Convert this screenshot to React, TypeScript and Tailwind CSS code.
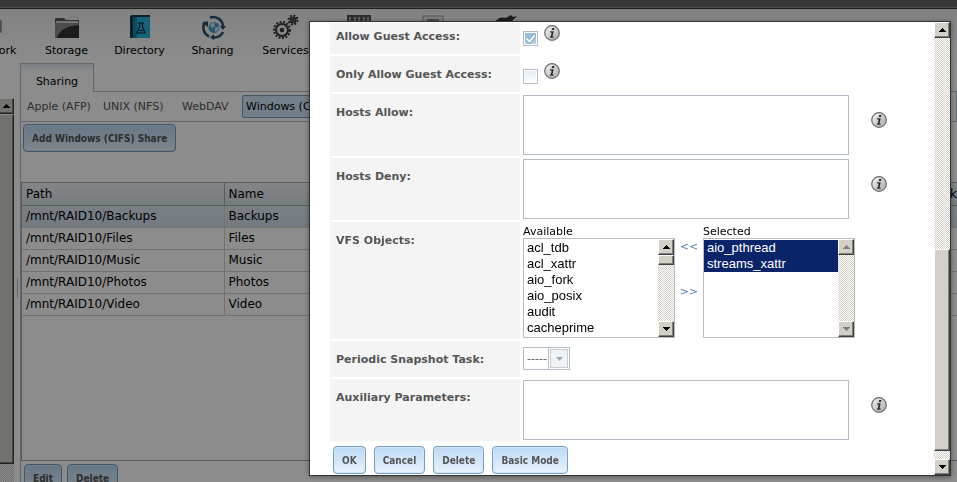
import React from "react";
import clsx from "clsx";

const navItems = [
    {label: "Network", icon: "network"},
    {label: "Storage", icon: "storage"},
    {label: "Directory", icon: "directory"},
    {label: "Sharing", icon: "sharing"},
    {label: "Services", icon: "services"},
    {label: "", icon: "plugins"},
    {label: "", icon: "jails"},
    {label: "", icon: "reporting"},
];

const shares = ["Backups", "Files", "Music", "Photos", "Video"];

const vfsAvailable = ["acl_tdb", "acl_xattr", "aio_fork", "aio_posix", "audit", "cacheprime"];
const vfsSelected = ["aio_pthread", "streams_xattr"];

const Gear: React.FC<{cx: number; cy: number; r: number}> = ({cx, cy, r}) => (
    <g>
        <circle cx={cx} cy={cy} r={r} fill="none" stroke="#3a3a3a" strokeWidth={2} strokeDasharray="2 1.5"/>
        <circle cx={cx} cy={cy} r={r - 2} fill="none" stroke="#3a3a3a" strokeWidth={2}/>
        <circle cx={cx} cy={cy} r={r / 3.5} fill="#3a3a3a"/>
    </g>
);

const NavIcon: React.FC<{name: string}> = ({name}) => (
    <svg viewBox="0 0 26 26" className="w-[26px] h-[26px]" aria-hidden="true">
        {name === "network" && (
            <g>
                <rect x="4" y="7" width="16" height="11" fill="#c8d4da" stroke="#50565a"/>
                <rect x="6" y="9" width="12" height="7" fill="#2785b4"/>
                <path d="M10 18h5v3h4v2H7v-2h3z" fill="#59656c"/>
            </g>
        )}
        {name === "storage" && (
            <g>
                <path d="M14 5q1-3 4-2 4-1 6 2v4H14z" fill="#f0f0f0" stroke="#bbb" strokeWidth=".6"/>
                <path d="M1 5q0-1 1-1h8l2 2h13v18H1z" fill="#585858"/>
                <path d="M2 7h22v3H2z" fill="#d6d6d6"/>
                <path d="M1 9h24v15H1z" fill="#8b8b8b"/>
                <path d="M3 24Q7 12 25 11v13z" fill="#323232"/>
            </g>
        )}
        {name === "directory" && (
            <g>
                <path d="M3 2l2-1h18v2H6v21H3z" fill="#153747"/>
                <rect x="6" y="3" width="17" height="21" fill="#1688b0"/>
                <rect x="10" y="3" width="13" height="21" fill="#28b3dc"/>
                <path d="M11 9h6M12.500 9v4L10 19h8l-2.500-6V9M12 16.500h4" fill="none" stroke="#062a38" strokeWidth="1.200"/>
            </g>
        )}
        {name === "sharing" && (
            <g fill="none" stroke="#28516d" strokeWidth="2.500">
                <path d="M10 3.500A10 10 0 0 1 23 12"/>
                <path d="M23 18a10 10 0 0 1-9 5.500"/>
                <path d="M9 22.500A10 10 0 0 1 5 8"/>
                <path d="M20 12h6l-3 4zM14 20v6l-4-2.500zM2 9l6-2v6z" fill="#28516d" stroke="none"/>
                <circle cx="14" cy="13.500" r="5.500" fill="#4a9cc8" stroke="none"/>
                <path d="M10 11l4-3 1 4-3 2zM15 14l4-2-1 5-3 1z" fill="#cbe3ee" stroke="none"/>
            </g>
        )}
        {name === "services" && (
            <g>
                <Gear cx={9} cy={16} r={8}/>
                <Gear cx={20} cy={6} r={4.5}/>
            </g>
        )}
        {name === "plugins" && (
            <g>
                <rect x="1" y="1" width="24" height="22" fill="#555"/>
                <path d="M4 3v4M9 3v4M13 3v4M18 3v4M22 3v4" stroke="#aaa" strokeWidth="2"/>
            </g>
        )}
        {name === "jails" && (
            <g>
                <rect x="4" y="2" width="20" height="20" fill="#e4e4e4" stroke="#999"/>
                <rect x="8" y="5" width="12" height="10" fill="#888"/>
            </g>
        )}
        {name === "reporting" && (
            <path d="M3 8Q7 2 14 4l5-3 2 2 4-1-5 5-8 1z" fill="#333"/>
        )}
    </svg>
);

const InfoIcon: React.FC = () => (
    <svg viewBox="0 0 16 16" className="w-4 h-4 shrink-0" role="img" aria-label="Help">
        <defs>
            <linearGradient id="info" x1="0" y1="0" x2="1" y2="1">
                <stop offset="0" stopColor="#f4f4f4"/>
                <stop offset="1" stopColor="#a9a9a9"/>
            </linearGradient>
        </defs>
        <circle cx="8" cy="8" r="7.300" fill="url(#info)" stroke="#6b6b6b" strokeWidth="1.200"/>
        <path d="M8.200 3h2.200l-.4 1.900H7.800zM6.300 6.200h3.400L8.500 11.500h1.300l-.3 1.300H5.700l.3-1.300h.8l.9-4H6z" fill="#2b2b2b"/>
    </svg>
);

interface ScrollArrowProps {
    dir: "up" | "down";
    disabled?: boolean;
}

const ScrollArrow: React.FC<ScrollArrowProps> = ({dir, disabled}) => (
    <button
        type="button"
        disabled={disabled}
        aria-label={`Scroll ${dir}`}
        className="w-4 h-4 shrink-0 flex items-center justify-center bg-[#d4d0c8] border border-t-white border-l-white border-r-[#404040] border-b-[#404040] shadow-[inset_-1px_-1px_0_#808080]"
    >
        <svg viewBox="0 0 7 4" className="w-[7px] h-1" shapeRendering="crispEdges">
            <path d={dir === "up" ? "M3 0h1v1h1v1h1v1h1v1H0V3h1V2h1V1h1z" : "M0 0h7v1H6v1H5v1H4v1H3V3H2V2H1V1H0z"}
                  fill={disabled ? "#808080" : "#000"}/>
        </svg>
    </button>
);

const trackClass = "bg-white bg-[conic-gradient(#d4d0c8_25%,#fff_0_50%,#d4d0c8_0_75%,#fff_0)] bg-[length:2px_2px]";
const thumbClass = "bg-[#d4d0c8] border border-t-white border-l-white border-r-[#404040] border-b-[#404040] shadow-[inset_-1px_-1px_0_#808080]";

const ActionButton: React.FC<{label: string}> = ({label}) => (
    <button
        type="button"
        className="h-7 px-2 rounded-[4px] border border-[#759dc0] bg-linear-to-b from-[#bcd8f4] to-[#e8f3fd] shadow-[inset_0_0_0_1px_#d5e8fa] text-[10px] font-bold text-[#555] whitespace-nowrap font-['DejaVu_Sans_Condensed','DejaVu_Sans',sans-serif]"
    >
        {label}
    </button>
);

interface RowProps {
    label: string;
    htmlFor: string;
    first?: boolean;
    children?: React.ReactNode;
}

const FormRow: React.FC<RowProps> = ({label, htmlFor, first, children}) => (
    <div className="flex gap-[3px]">
        <label
            htmlFor={htmlFor}
            className={clsx("w-[190px] shrink-0 pl-1.5 leading-4 bg-[#f4f4f4] font-bold text-[#555]", first ? "pt-1.5" : "pt-[11px]")}
        >
            {label}
        </label>
        {children}
    </div>
);

const CheckRow: React.FC<RowProps & {checked?: boolean}> = ({checked, ...row}) => (
    <FormRow {...row}>
        <div className={clsx("flex items-start gap-1.5", row.first ? "h-[31px] pt-0.5" : "h-9 pt-[7px]")}>
            <span className="relative mt-1.5 w-[15px] h-[15px]">
                <input
                    id={row.htmlFor}
                    type="checkbox"
                    defaultChecked={checked}
                    className="peer block w-[15px] h-[15px] appearance-none border border-[#b5bcc7] bg-linear-to-b from-[#dcebf7] to-white shadow-[inset_0_0_0_1px_#fff] checked:from-[#8fbcd9] checked:to-[#b5d4ea]"
                />
                <svg viewBox="0 0 15 15" className="absolute inset-0 hidden peer-checked:block pointer-events-none">
                    <path d="M3.500 7.500l3 3 5-6" fill="none" stroke="#5f8fb0" strokeWidth="3.400"/>
                    <path d="M3.500 7.500l3 3 5-6" fill="none" stroke="#fff" strokeWidth="2"/>
                </svg>
            </span>
            <InfoIcon/>
        </div>
    </FormRow>
);

const TextRow: React.FC<{label: string; id: string}> = ({label, id}) => (
    <FormRow label={label} htmlFor={id}>
        <div className="flex grow items-start gap-[22px] py-px pr-[47px]">
            <textarea id={id} className="block grow h-[60px] resize-none border border-[#b5bcc7] bg-white"/>
            <span className="mt-[17px]"><InfoIcon/></span>
        </div>
    </FormRow>
);

interface ListBoxProps {
    id: string;
    label: string;
    options: string[];
    selected?: string[];
}

const ListBox: React.FC<ListBoxProps> = ({id, label, options, selected = []}) => (
    <div className="w-[152px]">
        <label htmlFor={id} className="block h-4 leading-5 text-black">{label}</label>
        <div className="flex h-[100px] border border-[#bdbdbd]">
            <select
                id={id}
                multiple
                size={6}
                defaultValue={selected}
                className="grow min-w-0 h-[98px] py-px overflow-hidden appearance-none outline-none text-[13px] leading-4 text-black font-['Liberation_Sans',Arial,sans-serif]"
            >
                {options.map((o) => (
                    <option key={o} className="h-4 min-h-0 py-0 px-[3px] leading-[18px] checked:bg-[#0a246a] checked:text-white">{o}</option>
                ))}
            </select>
            <div className={clsx("flex flex-col justify-between w-4", trackClass)}>
                <div>
                    <ScrollArrow dir="up" disabled={selected.length > 0}/>
                    {selected.length === 0 && <div className={clsx("h-2.5", thumbClass)}/>}
                </div>
                <ScrollArrow dir="down" disabled={selected.length > 0}/>
            </div>
        </div>
    </div>
);

const ShareDialog: React.FC = () => (
    <div
        role="dialog"
        aria-label="Edit share"
        className="fixed left-[309px] right-1.5 top-[21px] bottom-1.5 flex overflow-hidden bg-white border border-[#333] shadow-[0_1px_5px_rgba(0,0,0,0.4)]"
    >
        <form className="grow pl-5 pt-px">
            <div className="flex flex-col gap-0.5">
                <CheckRow label="Allow Guest Access:" htmlFor="guest" first checked/>
                <CheckRow label="Only Allow Guest Access:" htmlFor="guestonly"/>
                <TextRow label="Hosts Allow:" id="hostsallow"/>
                <TextRow label="Hosts Deny:" id="hostsdeny"/>
                <FormRow label="VFS Objects:" htmlFor="available">
                    <div className="flex pb-px">
                        <ListBox id="available" label="Available" options={vfsAvailable}/>
                        <div className="flex flex-col items-center gap-[29px] w-7 pt-[17px] text-[#4f7cac]">
                            <button type="button" className="h-4 leading-4">&lt;&lt;</button>
                            <button type="button" className="h-4 leading-4">&gt;&gt;</button>
                        </div>
                        <ListBox id="selected" label="Selected" options={vfsSelected} selected={vfsSelected}/>
                    </div>
                </FormRow>
                <FormRow label="Periodic Snapshot Task:" htmlFor="snapshot">
                    <div className="flex h-[23px] mt-1.5 mb-[7px] border border-[#b5bcc7] bg-white">
                        <select id="snapshot" disabled className="w-6 pl-[3px] pt-0.5 appearance-none text-[11px] text-[#555] opacity-100">
                            <option>-----</option>
                        </select>
                        <span className="flex items-center justify-center w-[21px] border-l border-[#b5bcc7] p-px">
                            <span className="flex items-center justify-center w-full h-full border border-[#c4cbd4] bg-[#f0f3f6]">
                                <svg viewBox="0 0 7 4" className="w-[7px] h-1"><path d="M0 0h7L3.500 4z" fill="#96a9bb"/></svg>
                            </span>
                        </span>
                    </div>
                </FormRow>
                <TextRow label="Auxiliary Parameters:" id="aux"/>
            </div>
            <div className="flex gap-2 pl-[3px] pt-[5px]">
                <ActionButton label="OK"/>
                <ActionButton label="Cancel"/>
                <ActionButton label="Delete"/>
                <ActionButton label="Basic Mode"/>
            </div>
        </form>
        <div className={clsx("flex flex-col w-4 shrink-0", trackClass)}>
            <ScrollArrow dir="up"/>
            <div className="grow"/>
            <div className={clsx("h-[202px]", thumbClass)}/>
            <div className="h-2"/>
            <ScrollArrow dir="down"/>
        </div>
    </div>
);

const App: React.FC = () => {
    return (
        <div className="flex flex-col h-screen overflow-hidden bg-white text-[11px] text-black font-['DejaVu_Sans',Verdana,sans-serif]">
            <div className="h-[9px] shrink-0 bg-[#646464] border-b border-[#3a3a3a] shadow-[inset_0_-1px_0_#8c8c8c]"/>
            <nav className="flex h-[53px] shrink-0 -ml-[43px] pt-[5px] bg-linear-to-b from-[#ececec] to-white">
                {navItems.map((item) => (
                    <a key={item.icon} href="#" className="flex flex-col items-center w-[73px] shrink-0">
                        <NavIcon name={item.icon}/>
                        <span className="leading-[22px]">{item.label}</span>
                    </a>
                ))}
            </nav>

            <div className="flex grow min-h-0">
                <aside className="flex flex-col items-end w-3.5 shrink-0 pt-9 overflow-hidden">
                    <ScrollArrow dir="up"/>
                    <div className={clsx("w-4 grow", thumbClass)}/>
                    <div className={clsx("w-4 h-[18px]", trackClass)}/>
                </aside>
                <div className="flex items-center w-1.5 shrink-0 pl-[3px]">
                    <div className="w-px h-5 mt-8 bg-[#b5bcc7]"/>
                </div>

                <main className="flex flex-col grow min-w-0">
                    <div className="flex h-[30px] shrink-0">
                        <button type="button" className="w-[74px] mt-px pt-2 border border-b-0 border-[#b5bcc7] bg-linear-to-b from-[#dfeaf5] to-white to-30%">
                            Sharing
                        </button>
                        <div className="grow border-b border-[#b5bcc7]"/>
                    </div>
                    <div className="flex items-center h-[30px] shrink-0 border-x border-b border-[#b5bcc7] pl-1.5 text-[#555]">
                        <button type="button" className="w-[76px] pt-0.5 text-left whitespace-nowrap">Apple (AFP)</button>
                        <button type="button" className="w-[79px] pt-0.5 text-left whitespace-nowrap">UNIX (NFS)</button>
                        <button type="button" className="w-[60px] pt-0.5 text-left whitespace-nowrap">WebDAV</button>
                        <button type="button" className="h-[23px] px-[3px] pt-0.5 border border-[#759dc0] rounded-[2px] bg-[#cfe5fa] text-black whitespace-nowrap">
                            Windows (CIFS)
                        </button>
                    </div>
                    <div className="flex flex-col grow min-h-0 border-l border-[#b5bcc7]">
                        <div className="h-[60px] shrink-0 pt-0.5 pl-0.5">
                            <ActionButton label="Add Windows (CIFS) Share"/>
                        </div>
                        <div className="h-[279px] shrink-0 border-y border-l border-[#a5a9ae]">
                            <table className="w-full table-fixed border-collapse text-left text-[12px] leading-4">
                                <thead>
                                    <tr className="h-[22px] bg-linear-to-b from-[#edf3f7] to-[#d8e2e9]">
                                        <th className="w-[202px] px-1 font-normal border-r border-b border-[#a5a9ae]">Path</th>
                                        <th className="px-1 font-normal border-b border-[#a5a9ae]">Name</th>
                                        <th className="w-8 text-right font-normal border-b border-[#a5a9ae]">Park</th>
                                    </tr>
                                </thead>
                                <tbody>
                                    {shares.map((name, i) => (
                                        <tr key={name} className={clsx("h-[22px]", i === 0 && "bg-linear-to-b from-[#dde7f0] to-[#d2dfeb]")}>
                                            <td className="px-1 border-r border-b border-[#d6cfc4]">/mnt/RAID10/{name}</td>
                                            <td className="px-1 border-b border-[#d6cfc4]">{name}</td>
                                            <td className="border-b border-[#d6cfc4]"/>
                                        </tr>
                                    ))}
                                </tbody>
                            </table>
                        </div>
                        <div className="flex gap-[5px] pt-[3px] pl-[3px]">
                            <ActionButton label="Edit"/>
                            <ActionButton label="Delete"/>
                        </div>
                    </div>
                </main>
            </div>

            <div className="fixed inset-0 bg-black/45"/>
            <ShareDialog/>
        </div>
    );
};

export default App;
